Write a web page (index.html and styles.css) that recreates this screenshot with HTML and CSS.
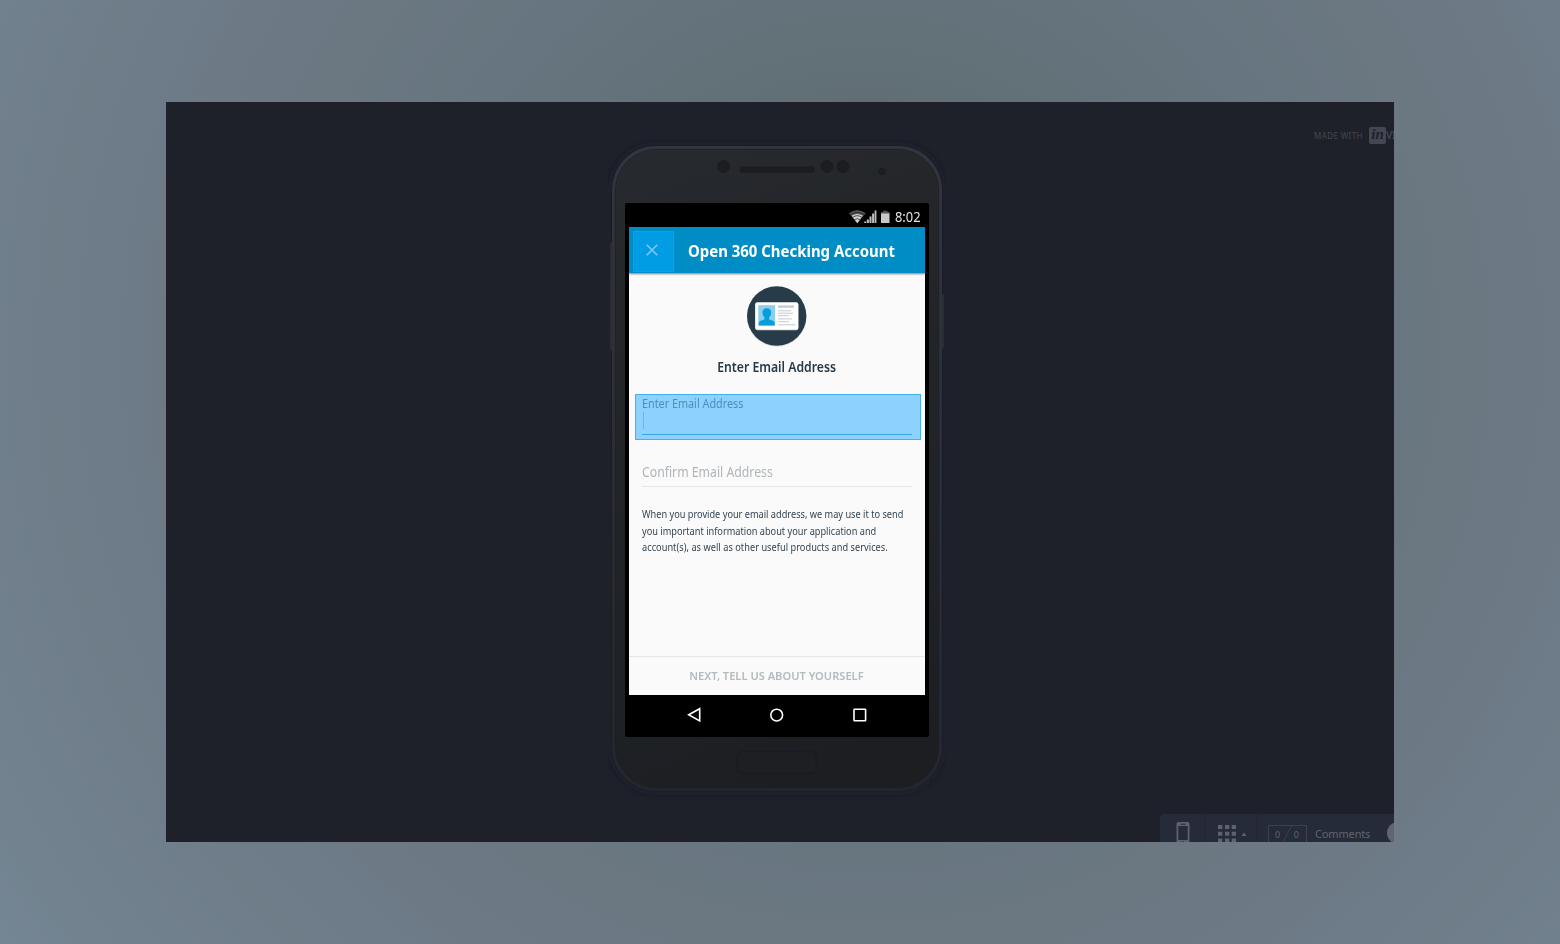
FILE: index.html
```html
<!DOCTYPE html>
<html lang="en">
<head>
<meta charset="utf-8">
<title>Open 360 Checking Account</title>
<link rel="stylesheet" href="styles.css">
</head>
<body>
<main class="stage">
  <div class="made-with">
    <span class="made-label">MADE WITH</span>
    <span class="made-logo">in</span><span class="made-name">VI</span>
  </div>

  <div class="phone">
    <svg class="shell" width="338" height="660" viewBox="0 0 338 660" aria-hidden="true">
      <defs>
        <linearGradient id="rim" x1="0" y1="0" x2="0" y2="1">
          <stop offset="0" stop-color="#31353f"/><stop offset=".5" stop-color="#292e37"/><stop offset="1" stop-color="#22262e"/>
        </linearGradient>
        <linearGradient id="body" x1=".3" y1="0" x2=".5" y2="1">
          <stop offset="0" stop-color="#26292e"/><stop offset=".2" stop-color="#242629"/><stop offset=".8" stop-color="#1e2126"/><stop offset="1" stop-color="#1d1e22"/>
        </linearGradient>
        <filter id="soft" x="-20%" y="-20%" width="140%" height="140%"><feGaussianBlur stdDeviation="4"/></filter>
      </defs>
      <rect x="4" y="6" width="330" height="645" rx="44" fill="#1c1f2a" filter="url(#soft)"/>
      <rect x="2" y="102" width="5" height="109" rx="2" fill="#2a2d34"/>
      <rect x="331" y="154" width="5" height="55" rx="2" fill="#2a2d34"/>
      <rect x="4" y="6" width="330" height="645" rx="44" fill="url(#rim)"/>
      <rect x="7.300" y="9.300" width="323.400" height="638.400" rx="41" fill="url(#body)" stroke="#1c1e23" stroke-width=".7"/>
      <g fill="#1c1d20">
        <circle cx="115.500" cy="26.500" r="6.500"/>
        <rect x="131.500" y="26.500" width="75" height="6.500" rx="3"/>
        <circle cx="219" cy="26.500" r="6.500"/>
        <circle cx="235" cy="26.500" r="6.500"/>
        <circle cx="274" cy="31.500" r="3.800"/>
      </g>
      <rect x="129.500" y="611.500" width="79" height="22" rx="5" fill="#1d1f22" stroke="#191b1f" stroke-width="1.500"/>
    </svg>

    <div class="screen">
      <div class="status">
        <svg width="41" height="14" viewBox="0 0 41 14" aria-hidden="true">
          <path d="M0 3.300Q8.300-2.700 16.600 3.300L8.300 13.300z" fill="#595959"/>
          <path d="M2.700 5.800Q8.300 2 13.900 5.800L8.300 13.300z" fill="#d0d0d0"/>
          <g fill="none" stroke="#111" stroke-width=".7"><path d="M1.500 4.700Q8.300 0 15.100 4.700M3.600 7.400Q8.300 4 13 7.400M5.400 9.700Q8.300 7.600 11.200 9.700"/></g>
          <path d="M15.200 13v-1.500h2V13zM17.800 13V9.500h2.100V13zM20.500 13V6.500h2V13zM23.100 13V3.500h2V13zM25.600 13V.5h1.800V13z" fill="#bdbdbd"/>
          <path d="M32 2h2V.7h4.500V2h2v2H32z" fill="#555"/>
          <path d="M32 3.500h8.500V13H32z" fill="#c8c8c8"/>
        </svg>
        <span class="clock">8:02</span>
      </div>
      <header class="titlebar">
        <button class="close" aria-label="Close">
          <svg width="12" height="12" viewBox="0 0 12 12"><path d="M.7.700 11.300 11.300M11.300.700.7 11.300" fill="none" stroke="#83c9f4" stroke-width="1.500"/></svg>
        </button>
        <h1 class="title">Open 360 Checking Account</h1>
      </header>
      <section class="content">
        <svg class="badge" width="64" height="64" viewBox="0 0 64 64" aria-hidden="true">
          <circle cx="31.700" cy="33" r="29.800" fill="#e2e4e5"/>
          <circle cx="31.700" cy="32" r="29.700" fill="#283b49"/>
          <rect x="10.300" y="18.900" width="43" height="27.300" rx="2" fill="#d8dbdd"/>
          <rect x="10.300" y="18.200" width="43" height="27" rx="2" fill="#fff"/>
          <rect x="13.300" y="21.200" width="16.800" height="20.300" fill="#8bcfed"/>
          <path d="M13.800 41.500v-2.400q0-1.900 2.600-2.600l3-1v-2.300c-1.300-1.200-1.900-2.800-1.900-4.700 0-2.900 1.700-4.300 4.300-4.300s4.400 1.400 4.400 4.300c0 1.900-.7 3.500-2 4.700v2.300l3 1q2.500.7 2.500 2.600v2.400z" fill="#069dd9"/>
          <g fill="#c4c9ce">
            <rect x="33" y="21.500" width="16" height="2.200"/>
            <rect x="33" y="26.300" width="13" height="1"/><rect x="33" y="28.700" width="15" height="1"/>
            <rect x="33" y="31.200" width="11" height="1"/><rect x="33" y="34.400" width="14" height="1"/>
            <rect x="33" y="37.200" width="11" height="1"/><rect x="33" y="40.300" width="17.500" height="1"/>
          </g>
        </svg>
        <h2 class="heading">Enter Email Address</h2>
        <div class="field active">
          <label class="label">Enter Email Address</label>
          <div class="entry"><span class="caret"></span></div>
        </div>
        <div class="field confirm"><span class="placeholder">Confirm Email Address</span></div>
        <p class="note">When you provide your email address, we may use it to send<br>you important information about your application and<br><span class="note-end">account(s), as well as other useful products and services.</span></p>
        <button class="next"><span class="next-label">NEXT, TELL US ABOUT YOURSELF</span></button>
      </section>
      <nav class="android-nav">
        <svg width="14" height="15" viewBox="0 0 14 15"><path d="M12.700 1.700v12.200L1.700 7.800z" fill="none" stroke="#fff" stroke-width="1.600"/></svg>
        <svg width="14" height="15" viewBox="0 0 14 15"><circle cx="6.700" cy="8.100" r="5.900" fill="none" stroke="#fff" stroke-width="1.600"/></svg>
        <svg width="14" height="15" viewBox="0 0 14 15"><rect x="1" y="2.200" width="11.600" height="11.600" rx=".5" fill="none" stroke="#fff" stroke-width="1.600"/></svg>
      </nav>
    </div>
  </div>

  <div class="toolbar">
    <div class="tool device">
      <svg width="14" height="24" viewBox="0 0 14 24"><rect x=".5" width="13" height="23" rx="2" fill="#5e616e"/><path d="M2.300 4h9.400v14H2.300z" fill="#252b39"/><path d="M4.500 1.700h5v1h-5z" fill="#252b39"/><circle cx="7" cy="20.300" r="1" fill="#252b39"/></svg>
    </div>
    <div class="tool screens">
      <svg width="29" height="18" viewBox="0 0 29 18" fill="#5e616e"><path d="M0 0h4.300v4H0zM7 0h4.300v4H7zM13.700 0H18v4h-4.300zM0 6.800h4.300v4H0zM7 6.800h4.300v4H7zM13.700 6.800H18v4h-4.300zM0 13.600h4.300v4H0zM7 13.600h4.300v4H7zM13.700 13.600H18v4h-4.300zM23.500 11l2.500-3.600 2.500 3.600z"/></svg>
    </div>
    <div class="tool comments">
      <div class="count"><span>0</span><svg width="10" height="17" viewBox="0 0 10 17"><path d="M.5 17 9.500 0" stroke="#3d404d"/></svg><span>0</span></div>
      <span class="comments-label">Comments</span>
      <span class="toggle"></span>
    </div>
  </div>
</main>
</body>
</html>
```

FILE: styles.css
```css
* { box-sizing: border-box; }
body {
  margin: 0;
  width: 1560px;
  height: 944px;
  padding: 102px 166px;
  overflow: hidden;
  font-family: "Noto Sans", "Open Sans", sans-serif;
  background: radial-gradient(circle 1050px at 865px 350px, #5b686b 0%, #616f75 24%, #677580 43%, #6b7882 57%, #6e7b88 72%, #71818d 89%, #748594 100%);
}
h1, h2, p { margin: 0; }
button { border: 0; padding: 0; background: none; font: inherit; }
svg { display: block; flex: none; }
span, label { white-space: nowrap; }

.stage {
  position: relative;
  width: 1228px;
  height: 740px;
  overflow: hidden;
  background: #1e2129;
}

/* Attribution in the upper right, cut by the stage edge */
.made-with {
  position: absolute;
  left: 1148px;
  top: 24px;
  display: flex;
  align-items: center;
  height: 18px;
  color: #444753;
}
.made-label { width: 55px; font-size: 8px; letter-spacing: .4px; }
.made-logo {
  width: 17px;
  height: 17px;
  border-radius: 2px;
  background: #444753;
  color: #1e2129;
  font: italic bold 15px/15px "Liberation Serif", serif;
  text-align: center;
}
.made-name { font-size: 10px; font-weight: 600; letter-spacing: -.4px; }

/* Device */
.phone {
  position: relative;
  width: 338px;
  height: 660px;
  margin: 38px 0 0 442px;
  padding: 63.400px 17.500px 0 16.700px;
}
.shell { position: absolute; left: 0; top: 0; }
.screen {
  position: relative;
  display: flex;
  flex-direction: column;
  height: 534px;
  padding: 0 4px;
  border-radius: 2px;
  background: #000;
}
.status {
  display: flex;
  flex: none;
  align-items: center;
  justify-content: flex-end;
  gap: 5px;
  height: 24px;
  padding: 4px 4px 0 0;
}
.clock {
  width: 25.500px;
  color: #e4e4e4;
  font-size: 14px;
  line-height: 16px;
  transform: scaleX(.92);
  transform-origin: left;
}
.titlebar {
  position: relative;
  z-index: 1;
  display: flex;
  flex: none;
  align-items: center;
  height: 46px;
  padding-left: 4.500px;
  background: #008cc4;
  box-shadow: 0 1px 2px rgba(0, 0, 0, .5);
}
.close {
  display: flex;
  align-items: center;
  width: 41px;
  height: 41px;
  margin-top: 2px;
  padding: 0 0 3px 11.500px;
  border: 1px solid #159fe0;
  background: #009de5;
}
.title {
  margin: 2px 0 0 13.500px;
  color: #fff;
  font-size: 16.500px;
  font-weight: 700;
  line-height: 24px;
  white-space: nowrap;
  transform: scaleX(.905);
  transform-origin: left;
}
.content {
  display: flex;
  flex: 1;
  flex-direction: column;
  align-items: center;
  padding-top: 10.800px;
  background: #fafafa;
}
.heading {
  margin-top: 8.500px;
  color: #273a49;
  font-size: 13.500px;
  font-weight: 600;
  line-height: 20px;
  transform: scaleX(.905);
}
.field { align-self: flex-start; }
.active {
  width: 286px;
  height: 46px;
  margin: 17.500px 0 0 6px;
  padding: 0 8px 0 6.500px;
  border: 1px solid #47b0ec;
  background: #8dd1fe;
}
.label {
  display: block;
  color: #4590c2;
  font-size: 12px;
  line-height: 17px;
  transform: scaleX(.9);
  transform-origin: left;
}
.entry { height: 22.500px; border-bottom: 1px solid #3ca5e3; }
.caret { display: block; width: 1px; height: 17px; margin-left: .5px; background: #64b9f2; }
.confirm {
  width: 270px;
  height: 27px;
  margin: 19.500px 0 0 13px;
  border-bottom: 1px solid #e4e6e7;
}
.placeholder {
  display: inline-block;
  color: #afb5b9;
  font-size: 14px;
  line-height: 22px;
  transform: scaleX(.875);
  transform-origin: left;
}
.note {
  align-self: flex-start;
  margin: 19.500px 0 0 13px;
  color: #344553;
  font-size: 10px;
  line-height: 16.400px;
  white-space: nowrap;
  transform: scaleX(.919);
  transform-origin: left;
}
.note-end { letter-spacing: .04px; }
.next {
  align-self: stretch;
  height: 39px;
  margin-top: auto;
  padding-bottom: 2px;
  border-top: 1px solid #e5e6e7;
  color: #b4babe;
  font-size: 11.500px;
  font-weight: 600;
}
.next-label { display: inline-block; transform: scaleX(.965); }
.android-nav {
  display: flex;
  flex: none;
  align-items: center;
  justify-content: space-between;
  height: 42px;
  padding: 0 58px 3px;
}

/* Viewer tools, cut by the stage's lower right corner */
.toolbar {
  position: absolute;
  left: 994px;
  top: 712px;
  display: flex;
  height: 40px;
  border-radius: 4px 0 0 0;
  background: #252b39;
}
.tool { display: flex; align-items: flex-start; border-right: 1px solid #222633; }
.device { width: 45px; padding: 8px 0 0 16px; }
.screens { width: 52px; padding: 11px 0 0 13px; }
.comments { width: 180px; padding: 11px 0 0 11px; color: #62646f; }
.count {
  display: flex;
  justify-content: space-between;
  width: 39px;
  height: 18px;
  padding: 0 7px 0 6px;
  border: 1px solid #3d404d;
  font-size: 9px;
  line-height: 17px;
}
.comments-label { margin-left: 8px; font-size: 11px; line-height: 18px; letter-spacing: -.15px; }
.toggle { width: 22px; height: 22px; margin: -3px 0 0 17px; border-radius: 50%; background: #62646f; }
```
